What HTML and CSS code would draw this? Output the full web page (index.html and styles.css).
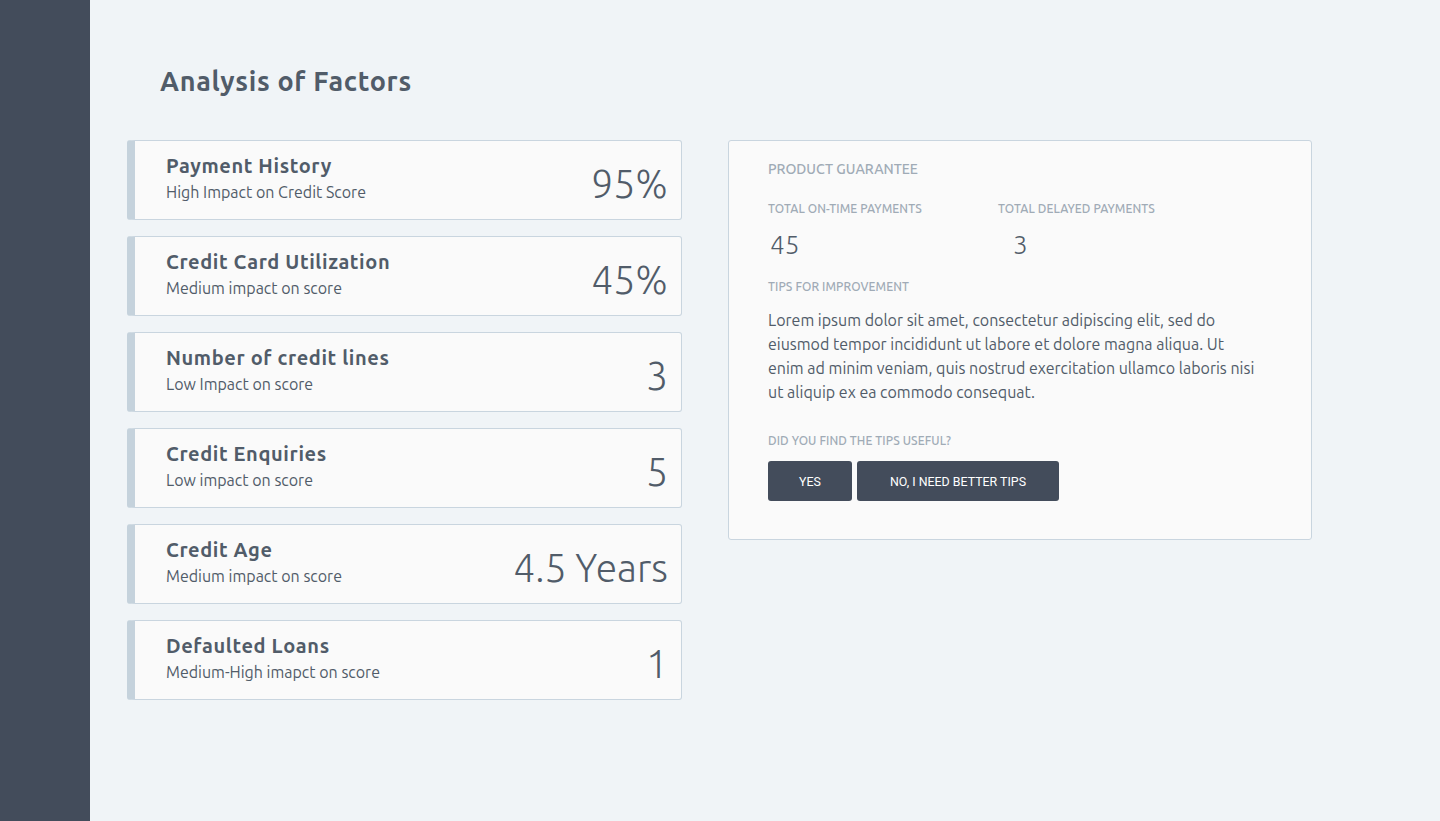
FILE: index.html
```html
<!DOCTYPE html>
<html>
<head>
<meta charset="utf-8">
<link rel="stylesheet" href="styles.css">
</head>
<body>
<div class="app">
  <aside class="sidebar"></aside>
  <main class="main">
    <h1 class="page-title">Analysis of Factors</h1>
    <div class="content">
      <div class="factors">
        <div class="factor">
          <div class="factor-text">
            <div class="factor-title">Payment History</div>
            <div class="factor-sub">High Impact on Credit Score</div>
          </div>
          <div class="factor-value">95%</div>
        </div>
        <div class="factor">
          <div class="factor-text">
            <div class="factor-title">Credit Card Utilization</div>
            <div class="factor-sub">Medium impact on score</div>
          </div>
          <div class="factor-value">45%</div>
        </div>
        <div class="factor">
          <div class="factor-text">
            <div class="factor-title">Number of credit lines</div>
            <div class="factor-sub">Low Impact on score</div>
          </div>
          <div class="factor-value">3</div>
        </div>
        <div class="factor">
          <div class="factor-text">
            <div class="factor-title">Credit Enquiries</div>
            <div class="factor-sub">Low impact on score</div>
          </div>
          <div class="factor-value">5</div>
        </div>
        <div class="factor">
          <div class="factor-text">
            <div class="factor-title">Credit Age</div>
            <div class="factor-sub">Medium impact on score</div>
          </div>
          <div class="factor-value">4.5 Years</div>
        </div>
        <div class="factor">
          <div class="factor-text">
            <div class="factor-title">Defaulted Loans</div>
            <div class="factor-sub">Medium-High imapct on score</div>
          </div>
          <div class="factor-value">1</div>
        </div>
      </div>
      <section class="panel">
        <div class="panel-heading">PRODUCT GUARANTEE</div>
        <div class="stats">
          <div class="stat">
            <div class="label">TOTAL ON-TIME PAYMENTS</div>
            <div class="stat-value">45</div>
          </div>
          <div class="stat">
            <div class="label">TOTAL DELAYED PAYMENTS</div>
            <div class="stat-value stat-value-b">3</div>
          </div>
        </div>
        <div class="label tips-label">TIPS FOR IMPROVEMENT</div>
        <p class="tips">Lorem ipsum dolor sit amet, consectetur adipiscing elit, sed do eiusmod tempor incididunt ut labore et dolore magna aliqua. Ut enim ad minim veniam, quis nostrud exercitation ullamco laboris nisi ut aliquip ex ea commodo consequat.</p>
        <div class="label useful-label">DID YOU FIND THE TIPS USEFUL?</div>
        <div class="buttons">
          <button class="btn btn-yes">YES</button>
          <button class="btn btn-no">NO, I NEED BETTER TIPS</button>
        </div>
      </section>
    </div>
  </main>
</div>
</body>
</html>
```

FILE: styles.css
```css
* { box-sizing: border-box; }
html, body { margin: 0; padding: 0; }
body {
  font-family: Ubuntu, "Noto Sans", sans-serif;
  background: #f0f4f7;
  color: #515c69;
}
.app {
  display: flex;
  min-height: 821px;
}
.sidebar {
  width: 90px;
  flex: none;
  background: #434c5b;
}
.main {
  flex: 1;
  padding: 0 0 0 37px;
}
.page-title {
  margin: 0;
  padding: 63px 0 0 33px;
  height: 140px;
  font-size: 27px;
  font-weight: 700;
  letter-spacing: 0.7px;
  line-height: 36px;
  color: #515c69;
}
.content {
  display: flex;
  align-items: flex-start;
  gap: 46px;
}
.factors {
  width: 555px;
  display: flex;
  flex-direction: column;
  gap: 16px;
}
.factor {
  height: 80px;
  background: #fafafa;
  border: 1px solid #c9d5df;
  border-left: 8px solid #c5d2dc;
  border-radius: 3px;
  display: flex;
  align-items: flex-start;
  justify-content: space-between;
  padding: 12px 13px 0 31px;
}
.factor-title {
  font-size: 20px;
  font-weight: 700;
  letter-spacing: 0.62px;
  line-height: 26px;
  color: #515c69;
}
.factor-sub {
  margin-top: 2px;
  font-size: 16px;
  line-height: 22px;
  color: #515c69;
}
.factor-value {
  align-self: center;
  margin-top: -4px;
  font-size: 39px;
  font-weight: 300;
  color: #515c69;
  line-height: 48px;
}
.panel {
  width: 584px;
  height: 400px;
  background: #fafafa;
  border: 1px solid #c9d5df;
  border-radius: 3px;
  padding: 18px 40px 0 39px;
}
.panel-heading {
  font-size: 14px;
  font-weight: 500;
  color: #a0abb6;
  line-height: 20px;
}
.label {
  font-size: 12px;
  font-weight: 500;
  letter-spacing: 0.1px;
  color: #a0abb6;
  line-height: 16px;
}
.stats {
  display: flex;
  margin-top: 22px;
}
.stat { width: 230px; }
.stat-value {
  font-size: 26px;
  font-weight: 300;
  line-height: 34px;
  margin-top: 11px;
  padding-left: 2px;
}
.stat-value-b { padding-left: 15px; }
.tips-label { margin-top: 17px; }
.tips {
  max-width: 493px;
  margin: 13px 0 0;
  font-size: 16px;
  line-height: 24px;
  color: #515c69;
}
.useful-label { margin-top: 29px; }
.buttons {
  display: flex;
  gap: 5px;
  margin-top: 12px;
}
.btn {
  height: 40px;
  border: none;
  border-radius: 3px;
  background: #434c5b;
  color: #ffffff;
  font-family: Roboto, sans-serif;
  font-size: 12.4px;
  padding: 0;
  cursor: pointer;
}
.btn-yes { width: 84px; }
.btn-no { width: 202px; }
```
